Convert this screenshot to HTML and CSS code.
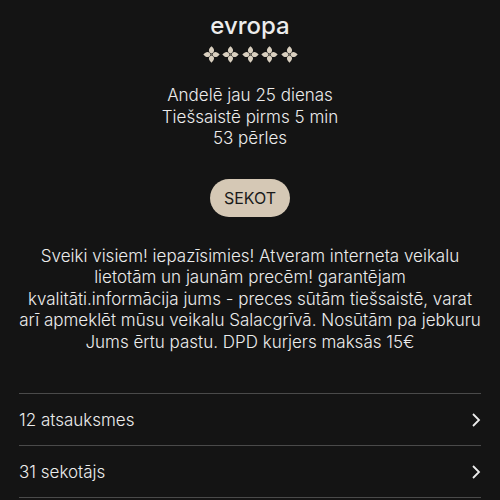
FILE: index.html
```html
<!DOCTYPE html>
<html>
<head>
	<title>evropa</title>
	<meta charset=utf-8>
	<meta name=viewport content="width=500, initial-scale=1">
	<link rel="stylesheet" href="styles.css">
</head>
<body>
	<!-- profila galva -->
	<div class="profile">
		<h1 class="name">evropa</h1>
		<div class="rating">
			<svg viewBox="0 0 16 16"><path d="M8 7.2 C4.6 5.8 5 2.8 8 0.3 C11 2.8 11.4 5.8 8 7.2Z M8 8.8 C4.6 10.2 5 13.2 8 15.7 C11 13.2 11.4 10.2 8 8.8Z M7.2 8 C5.8 4.6 2.8 5 0.3 8 C2.8 11 5.8 11.4 7.2 8Z M8.8 8 C10.2 4.6 13.2 5 15.7 8 C13.2 11 10.2 11.4 8.8 8Z"/><circle cx="8" cy="8" r="0.9" class="dot"/></svg>
			<svg viewBox="0 0 16 16"><path d="M8 7.2 C4.6 5.8 5 2.8 8 0.3 C11 2.8 11.4 5.8 8 7.2Z M8 8.8 C4.6 10.2 5 13.2 8 15.7 C11 13.2 11.4 10.2 8 8.8Z M7.2 8 C5.8 4.6 2.8 5 0.3 8 C2.8 11 5.8 11.4 7.2 8Z M8.8 8 C10.2 4.6 13.2 5 15.7 8 C13.2 11 10.2 11.4 8.8 8Z"/><circle cx="8" cy="8" r="0.9" class="dot"/></svg>
			<svg viewBox="0 0 16 16"><path d="M8 7.2 C4.6 5.8 5 2.8 8 0.3 C11 2.8 11.4 5.8 8 7.2Z M8 8.8 C4.6 10.2 5 13.2 8 15.7 C11 13.2 11.4 10.2 8 8.8Z M7.2 8 C5.8 4.6 2.8 5 0.3 8 C2.8 11 5.8 11.4 7.2 8Z M8.8 8 C10.2 4.6 13.2 5 15.7 8 C13.2 11 10.2 11.4 8.8 8Z"/><circle cx="8" cy="8" r="0.9" class="dot"/></svg>
			<svg viewBox="0 0 16 16"><path d="M8 7.2 C4.6 5.8 5 2.8 8 0.3 C11 2.8 11.4 5.8 8 7.2Z M8 8.8 C4.6 10.2 5 13.2 8 15.7 C11 13.2 11.4 10.2 8 8.8Z M7.2 8 C5.8 4.6 2.8 5 0.3 8 C2.8 11 5.8 11.4 7.2 8Z M8.8 8 C10.2 4.6 13.2 5 15.7 8 C13.2 11 10.2 11.4 8.8 8Z"/><circle cx="8" cy="8" r="0.9" class="dot"/></svg>
			<svg viewBox="0 0 16 16"><path d="M8 7.2 C4.6 5.8 5 2.8 8 0.3 C11 2.8 11.4 5.8 8 7.2Z M8 8.8 C4.6 10.2 5 13.2 8 15.7 C11 13.2 11.4 10.2 8 8.8Z M7.2 8 C5.8 4.6 2.8 5 0.3 8 C2.8 11 5.8 11.4 7.2 8Z M8.8 8 C10.2 4.6 13.2 5 15.7 8 C13.2 11 10.2 11.4 8.8 8Z"/><circle cx="8" cy="8" r="0.9" class="dot"/></svg>
		</div>
		<div class="stats">
			<div>Andelē jau 25 dienas</div>
			<div>Tiešsaistē pirms 5 min</div>
			<div>53 pērles</div>
		</div>
		<button class="follow">SEKOT</button>
		<p class="about">Sveiki visiem! iepazīsimies! Atveram interneta veikalu<br>lietotām un jaunām precēm! garantējam<br>kvalitāti.informācija jums - preces sūtām tiešsaistē, varat<br>arī apmeklēt mūsu veikalu Salacgrīvā. Nosūtām pa jebkuru<br>Jums ērtu pastu. DPD kurjers maksās 15€</p>
	</div>

	<!-- saites -->
	<ul class="links">
		<li><span>12 atsauksmes</span><svg viewBox="0 0 10 16"><path d="M2 2 L8 8 L2 14"/></svg></li>
		<li><span>31 sekotājs</span><svg viewBox="0 0 10 16"><path d="M2 2 L8 8 L2 14"/></svg></li>
	</ul>
</body>
</html>
```

FILE: styles.css
```css
body {
	margin: 0;
	background: #141414;
	color: #ececec;
	font-family: Inter, "Noto Sans", sans-serif;
}
.profile {
	display: flex;
	flex-direction: column;
	align-items: center;
	padding: 10px 16px 0;
}
.name {
	margin: 0;
	font-size: 24px;
	font-weight: 500;
	line-height: 32px;
}
.rating {
	display: flex;
	gap: 2.5px;
	margin-top: 4px;
}
.rating svg {
	width: 17px;
	height: 17px;
	fill: #d9cfbf;
}
.rating .dot {
	fill: #6b655c;
}
.stats {
	margin-top: 22px;
	text-align: center;
	font-size: 17px;
	font-weight: 300;
	line-height: 21.5px;
}
.follow {
	margin-top: 29px;
	background: #d5c8b5;
	color: #1a1a1a;
	border: none;
	border-radius: 19px;
	height: 38px;
	padding: 0 14px;
	font-family: inherit;
	font-size: 16px;
	font-weight: 400;
}
.about {
	margin: 29px 0 0;
	text-align: center;
	font-size: 17px;
	font-weight: 300;
	line-height: 21.5px;
}
.links {
	list-style: none;
	margin: 40px 19px 0;
	padding: 0;
	border-top: 1px solid #4a4a4a;
}
.links li {
	display: flex;
	justify-content: space-between;
	align-items: center;
	height: 51px;
	border-bottom: 1px solid #4a4a4a;
	font-size: 17px;
	font-weight: 300;
}
.links svg {
	width: 10px;
	height: 16px;
	fill: none;
	stroke: #ececec;
	stroke-width: 1.8;
}
```
